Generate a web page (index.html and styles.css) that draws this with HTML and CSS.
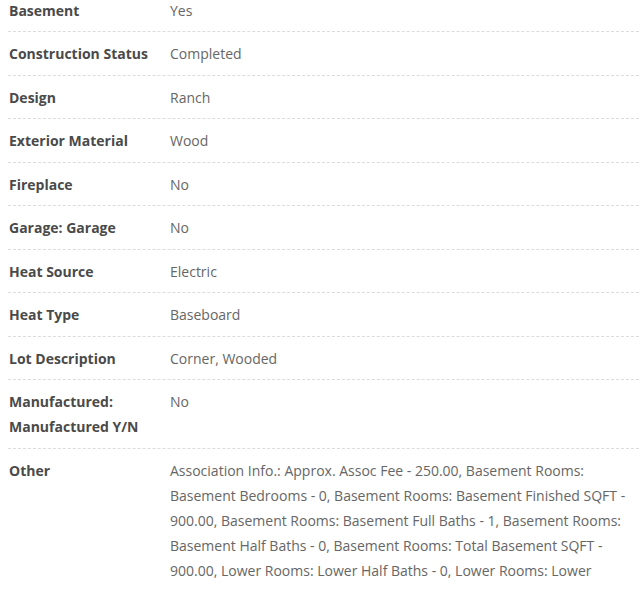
FILE: index.html
```html
<!DOCTYPE html>
<html>
<head>
<meta charset="utf-8">
<link rel="stylesheet" href="styles.css">
</head>
<body>
<div class="details">
  <div class="row"><div class="label">Basement</div><div class="value">Yes</div></div>
  <div class="row"><div class="label">Construction Status</div><div class="value">Completed</div></div>
  <div class="row"><div class="label">Design</div><div class="value">Ranch</div></div>
  <div class="row"><div class="label">Exterior Material</div><div class="value">Wood</div></div>
  <div class="row"><div class="label">Fireplace</div><div class="value">No</div></div>
  <div class="row"><div class="label">Garage: Garage</div><div class="value">No</div></div>
  <div class="row"><div class="label">Heat Source</div><div class="value">Electric</div></div>
  <div class="row"><div class="label">Heat Type</div><div class="value">Baseboard</div></div>
  <div class="row"><div class="label">Lot Description</div><div class="value">Corner, Wooded</div></div>
  <div class="row"><div class="label">Manufactured: Manufactured Y/N</div><div class="value">No</div></div>
  <div class="row"><div class="label">Other</div><div class="value">Association Info.: Approx. Assoc Fee - 250.00, Basement Rooms: Basement Bedrooms - 0, Basement Rooms: Basement Finished SQFT - 900.00, Basement Rooms: Basement Full Baths - 1, Basement Rooms: Basement Half Baths - 0, Basement Rooms: Total Basement SQFT - 900.00, Lower Rooms: Lower Half Baths - 0, Lower Rooms: Lower</div></div>
</div>
</body>
</html>
```
FILE: styles.css
```css
html, body {
  margin: 0;
  padding: 0;
  background: #fff;
}
body {
  font-family: "Open Sans", "Liberation Sans", sans-serif;
  font-size: 14px;
  line-height: 25px;
  overflow: hidden;
}
.details {
  margin: -11.5px 3px 0 8px;
}
.row {
  display: flex;
  padding: 9px 0 8.5px 0;
  border-bottom: 1px dashed #dcdcdc;
}
.label {
  width: 161px;
  flex: 0 0 161px;
  padding-left: 1px;
  font-weight: 700;
  color: #4a4a4a;
}
.value {
  flex: 1;
  color: #666;
  padding-right: 9px;
}
```
